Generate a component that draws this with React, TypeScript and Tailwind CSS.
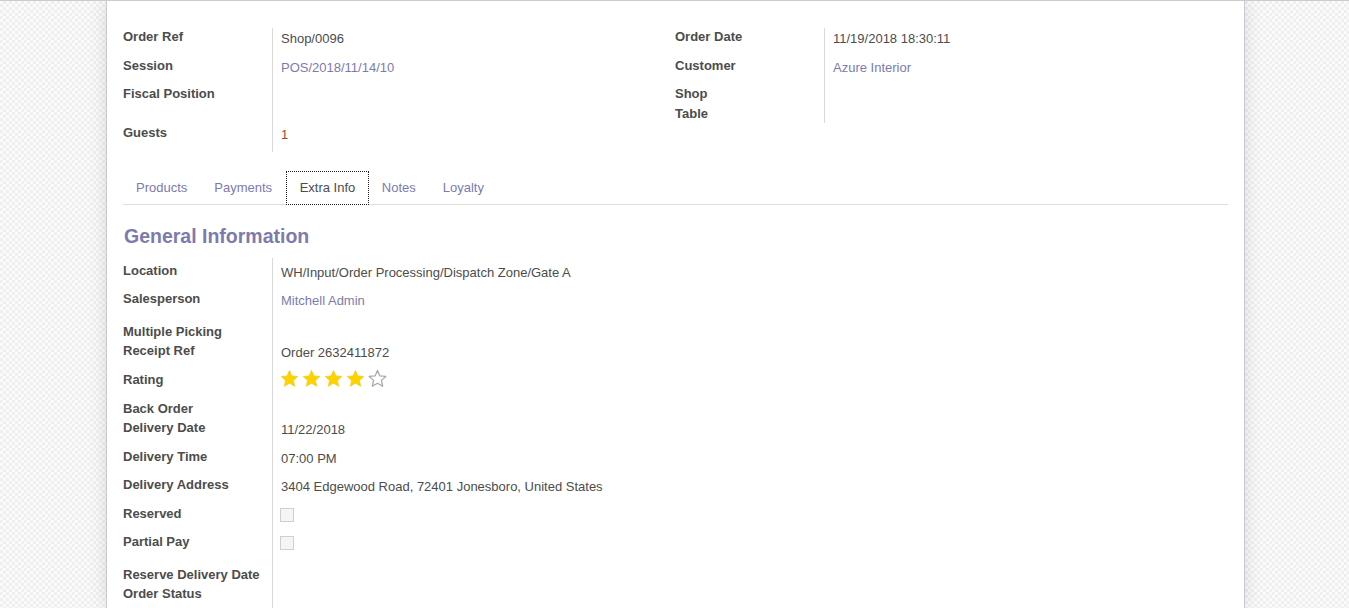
import React from "react";

type RowDef = {
  label: string;
  h: string;
  value?: React.ReactNode;
};

const LINK = "text-[#7c7bad]";

function Star({ filled }: { filled: boolean }) {
  return (
    <svg width="19" height="19" viewBox="0 0 24 24" className="block">
      <path
        d="M12 1.8l3.1 6.9 7.4.7-5.6 5 1.7 7.4L12 17.9l-6.6 3.9 1.7-7.4-5.6-5 7.4-.7z"
        fill={filled ? "#fdd203" : "none"}
        stroke={filled ? "#f5c800" : "#a9a9a9"}
        strokeWidth={filled ? 0.8 : 1.6}
        strokeLinejoin="round"
      />
    </svg>
  );
}

function Checkbox() {
  return <div className="-ml-px mt-[1px] h-[14px] w-[14px] border border-[#cfcfcf] bg-[#f5f5f5]" />;
}

function Group({
  rows,
  labelPad,
  valuePad,
}: {
  rows: RowDef[];
  labelPad: string;
  valuePad: string;
}) {
  return (
    <div className="flex flex-col">
      {rows.map((r) => (
        <div key={r.label} className={"flex " + r.h}>
          <div
            className={
              "w-[149px] shrink-0 font-bold text-[13px] leading-[18px] text-[#4c4c4c] " + labelPad
            }
          >
            {r.label}
          </div>
          <div
            className={
              "flex-1 border-l border-[#d9d9d9] pl-2 text-[13px] leading-[18px] text-[#4c4c4c] " +
              valuePad
            }
          >
            {r.value}
          </div>
        </div>
      ))}
    </div>
  );
}

export default function App() {
  const topLeft: RowDef[] = [
    { label: "Order Ref", h: "h-[29px]", value: "Shop/0096" },
    { label: "Session", h: "h-[28px]", value: <span className={LINK}>POS/2018/11/14/10</span> },
    { label: "Fiscal Position", h: "h-[39px]" },
    { label: "Guests", h: "h-[28px]", value: <span className="text-[#9a4a1e]">1</span> },
  ];
  const topRight: RowDef[] = [
    { label: "Order Date", h: "h-[29px]", value: "11/19/2018 18:30:11" },
    { label: "Customer", h: "h-[28px]", value: <span className={LINK}>Azure Interior</span> },
    { label: "Shop", h: "h-[20px]" },
    { label: "Table", h: "h-[18px]" },
  ];
  const bottom: RowDef[] = [
    { label: "Location", h: "h-[28px]", value: "WH/Input/Order Processing/Dispatch Zone/Gate A" },
    { label: "Salesperson", h: "h-[33px]", value: <span className={LINK}>Mitchell Admin</span> },
    { label: "Multiple Picking", h: "h-[19px]" },
    { label: "Receipt Ref", h: "h-[29px]", value: "Order 2632411872" },
    {
      label: "Rating",
      h: "h-[29px]",
      value: (
        <div className="-ml-px -mt-[4px] flex gap-[3px]">
          <Star filled />
          <Star filled />
          <Star filled />
          <Star filled />
          <Star filled={false} />
        </div>
      ),
    },
    { label: "Back Order", h: "h-[19px]" },
    { label: "Delivery Date", h: "h-[29px]", value: "11/22/2018" },
    { label: "Delivery Time", h: "h-[28px]", value: "07:00 PM" },
    {
      label: "Delivery Address",
      h: "h-[29px]",
      value: "3404 Edgewood Road, 72401 Jonesboro, United States",
    },
    { label: "Reserved", h: "h-[28px]", value: <Checkbox /> },
    { label: "Partial Pay", h: "h-[33px]", value: <Checkbox /> },
    { label: "Reserve Delivery Date", h: "h-[19px]" },
    { label: "Order Status", h: "h-[30px]" },
  ];

  const tabs = ["Products", "Payments", "Extra Info", "Notes", "Loyalty"];

  return (
    <div
      className="h-[608px] overflow-hidden border-t border-[#cccccc] bg-[#f7f7f7] bg-[image:repeating-conic-gradient(#efefef_0%_25%,#fbfbfb_0%_50%)] bg-[length:6px_6px] pl-[2px]"
      style={{ fontFamily: '"Liberation Sans", Arial, sans-serif' }}
    >
      <div className="mx-auto h-full w-[1139px] border-x border-[#c9c9d3] bg-white px-4 pt-[27px] shadow-[0_0_18px_rgba(0,0,0,0.12)]">
        <div className="grid grid-cols-[552px_1fr]">
          <Group rows={topLeft} labelPad="pt-0" valuePad="pt-[2px]" />
          <Group rows={topRight} labelPad="pt-0" valuePad="pt-[2px]" />
        </div>

        <div className="mt-[19px] flex h-[34px] border-b border-[#dddddd]">
          {tabs.map((t) =>
            t === "Extra Info" ? (
              <div
                key={t}
                className="-mb-px flex h-[34px] items-center bg-white pl-[13.5px] pr-[13.5px] text-[13px] text-[#4c4c4c] outline outline-1 outline-dotted outline-[#222] -outline-offset-1"
              >
                {t}
              </div>
            ) : (
              <div
                key={t}
                className="flex h-[34px] items-center pl-[13px] pr-[14px] text-[13px] text-[#7c7bad]"
              >
                {t}
              </div>
            )
          )}
        </div>

        <div className="mt-[19px] h-[24px] pl-px text-[19.5px] font-bold leading-[24px] text-[#7c7bad]">
          General Information
        </div>

        <div className="mt-[10px]">
          <Group rows={bottom} labelPad="pt-[4px]" valuePad="pt-[6px]" />
        </div>
      </div>
    </div>
  );
}
